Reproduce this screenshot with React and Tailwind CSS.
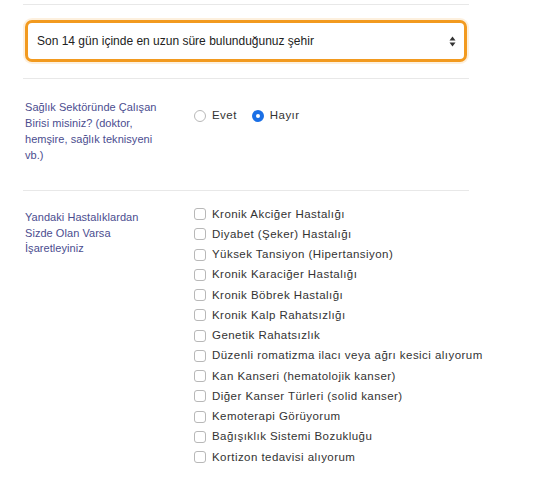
import React from "react";

const items = [
  "Kronik Akciğer Hastalığı",
  "Diyabet (Şeker) Hastalığı",
  "Yüksek Tansiyon (Hipertansiyon)",
  "Kronik Karaciğer Hastalığı",
  "Kronik Böbrek Hastalığı",
  "Kronik Kalp Rahatsızlığı",
  "Genetik Rahatsızlık",
  "Düzenli romatizma ilacı veya ağrı kesici alıyorum",
  "Kan Kanseri (hematolojik kanser)",
  "Diğer Kanser Türleri (solid kanser)",
  "Kemoterapi Görüyorum",
  "Bağışıklık Sistemi Bozukluğu",
  "Kortizon tedavisi alıyorum",
];

export default function App() {
  return (
    <div className="w-[556px] h-[479px] bg-white overflow-hidden font-['Liberation_Sans',Arial,sans-serif]">
      <div className="ml-[23px] w-[446px] mt-[4px]">
        <div className="border-t border-[#e8e8e8] pt-[15px] pb-[16px] px-[2px]">
          <div className="h-[42px] rounded-[7px] border-[3px] border-[#f29a1f] bg-white shadow-[0_0_0_2px_rgba(242,154,31,0.15)] flex items-center justify-between pl-[9px] pr-[8px]">
            <span className="text-[12px] text-[#222] whitespace-nowrap">Son 14 gün içinde en uzun süre bulunduğunuz şehir</span>
            <svg width="7" height="11" viewBox="0 0 7 11">
              <path d="M3.5 0.5 L6.5 4.5 L0.5 4.5 Z" fill="#333" />
              <path d="M3.5 10.5 L6.5 6.5 L0.5 6.5 Z" fill="#333" />
            </svg>
          </div>
        </div>
        <div className="border-t border-[#e8e8e8] pt-[20px] pb-[27px] flex">
          <div className="w-[164px] shrink-0 pl-[2px] text-[11px] leading-[16px] tracking-[0.05px] text-[#4b4d8f] whitespace-nowrap">
            <div>Sağlık Sektöründe Çalışan</div>
            <div>Birisi misiniz? (doktor,</div>
            <div>hemşire, sağlık teknisyeni</div>
            <div>vb.)</div>
          </div>
          <div className="ml-[7px] mt-[9px] h-[16px] flex items-center text-[11.5px] tracking-[0.45px] text-[#333]">
            <span className="w-[12px] h-[12px] rounded-full border border-[#b8b8b8] bg-white shrink-0" />
            <span className="ml-[6px]">Evet</span>
            <span className="ml-[15px] w-[12px] h-[12px] rounded-full bg-[#1a6fe6] flex items-center justify-center shrink-0">
              <span className="w-[4px] h-[4px] rounded-full bg-white" />
            </span>
            <span className="ml-[6px]">Hayır</span>
          </div>
        </div>
        <div className="border-t border-[#e8e8e8] pt-[13px] flex">
          <div className="w-[164px] shrink-0 pl-[2px] mt-[6px] text-[11px] leading-[15.5px] tracking-[0.05px] text-[#4b4d8f] whitespace-nowrap">
            <div>Yandaki Hastalıklardan</div>
            <div>Sizde Olan Varsa</div>
            <div>İşaretleyiniz</div>
          </div>
          <div className="ml-[7px] shrink-0 flex flex-col">
            {items.map((t) => (
              <div key={t} className="h-[20.25px] flex items-center text-[11.5px] tracking-[0.45px] text-[#333] whitespace-nowrap">
                <span className="w-[12px] h-[12px] rounded-[3px] border border-[#b8b8b8] bg-white shrink-0" />
                <span className="ml-[6px]">{t}</span>
              </div>
            ))}
          </div>
        </div>
      </div>
    </div>
  );
}
